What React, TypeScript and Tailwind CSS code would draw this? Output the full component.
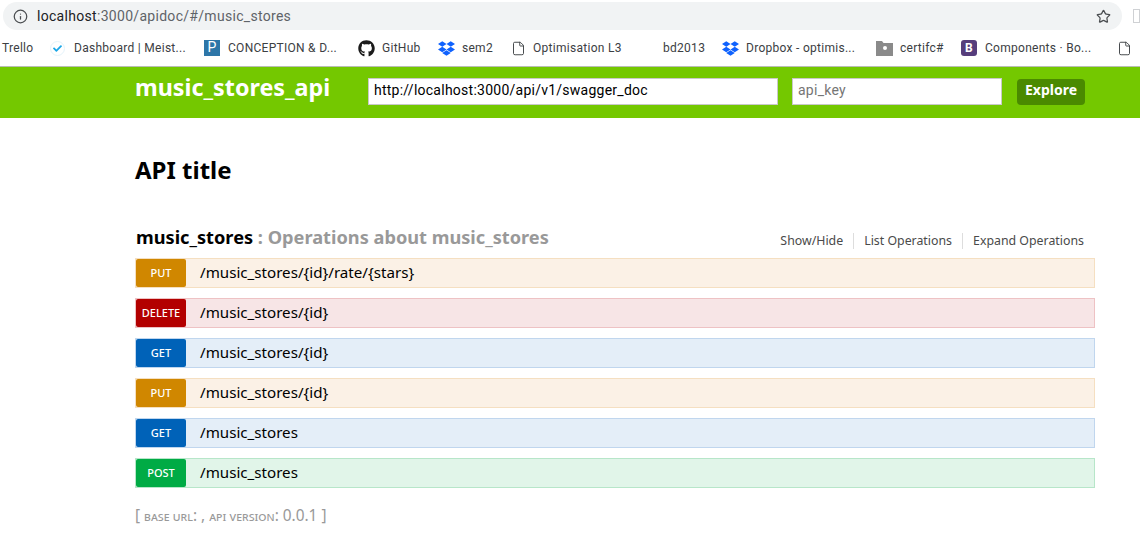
import React from "react";
import { Info, Star, File } from "lucide-react";
import { FaGithub, FaDropbox, FaCheck } from "react-icons/fa";

const sans = "font-['Noto_Sans','Open_Sans',sans-serif]";

function Bm({ w, icon, label, cls = "" }: { w: string; icon?: React.ReactNode; label?: string; cls?: string }) {
  return (
    <div className={`flex items-center shrink-0 ${w} ${cls}`}>
      {icon && <span className="w-[23px] shrink-0 flex items-center">{icon}</span>}
      {label && <span className="whitespace-nowrap">{label}</span>}
    </div>
  );
}

const ops = [
  { m: "PUT", p: "/music_stores/{id}/rate/{stars}", bar: "bg-[#fbf1e6] border-[#f5dfc1]", b: "bg-[#d08700]" },
  { m: "DELETE", p: "/music_stores/{id}", bar: "bg-[#f7e5e6] border-[#eec2c4]", b: "bg-[#b30000]" },
  { m: "GET", p: "/music_stores/{id}", bar: "bg-[#e4eef8] border-[#c0d6ee]", b: "bg-[#0062b8]" },
  { m: "PUT", p: "/music_stores/{id}", bar: "bg-[#fbf1e6] border-[#f5dfc1]", b: "bg-[#d08700]" },
  { m: "GET", p: "/music_stores", bar: "bg-[#e4eef8] border-[#c0d6ee]", b: "bg-[#0062b8]" },
  { m: "POST", p: "/music_stores", bar: "bg-[#e1f5e9] border-[#b7e6c9]", b: "bg-[#00ab45]" },
];

export default function App() {
  return (
    <div className={`w-[1140px] h-[542px] overflow-hidden bg-white ${sans}`}>
      <div className="h-[66px] font-['Roboto',sans-serif]">
        <div className="pt-[2px] pl-[3px] pr-[18px] relative">
          <div className="h-[28px] rounded-full bg-[#f1f3f4] flex items-center pl-[10px] pr-[11px] text-[14px] tracking-[0.3px] text-[#5f6368]">
            <Info size={15} strokeWidth={2} className="text-[#4a4d50] mr-[9px]" />
            <span><span className="text-[#202124]">localhost</span>:3000/apidoc/#/music_stores</span>
            <Star size={15} strokeWidth={2} className="ml-auto text-[#4a4d50]" />
          </div>
          <div className="absolute left-[1133px] top-[9px] w-[7px] h-[14px] border border-[#cfd1d4]"></div>
        </div>
        <div className="h-[36px] flex items-center text-[12px] tracking-[0.28px] text-[#3c4043] overflow-hidden">
          <Bm w="w-[51px]" cls="pl-[2px]" label="Trello" />
          <Bm w="w-[153px]" icon={<span className="w-[15px] h-[15px] rounded-full border border-[#e4f3fb] flex items-center justify-center -ml-[1px]"><FaCheck size={9} className="text-[#1aa7e8]" /></span>} label="Dashboard | Meist..." />
          <Bm w="w-[154px]" icon={<span className="w-[16px] h-[16px] bg-[#2d76a8] text-white text-[14px] leading-[15px] text-center font-normal">P</span>} cls="[&>span:first-child]:w-[24px]" label="CONCEPTION & D..." />
          <Bm w="w-[80px]" icon={<FaGithub size={17} className="text-[#1b1b1b]" />} cls="[&>span:first-child]:w-[24px]" label="GitHub" />
          <Bm w="w-[73px]" icon={<FaDropbox size={17} className="text-[#0f62fe]" />} cls="[&>span:first-child]:w-[24px]" label="sem2" />
          <Bm w="w-[152px]" icon={<File size={15} strokeWidth={1.5} className="text-[#3c4043]" />} cls="[&>span:first-child]:w-[22px]" label="Optimisation L3" />
          <Bm w="w-[59px]" label="bd2013" />
          <Bm w="w-[154px]" icon={<FaDropbox size={17} className="text-[#0f62fe]" />} cls="[&>span:first-child]:w-[24px]" label="Dropbox - optimis..." />
          <Bm w="w-[85px]" icon={<svg width="17" height="15" viewBox="0 0 17 15"><path d="M0 0h6l1.5 2H17v13H0z" fill="#8a8a8a" /><circle cx="9" cy="7" r="2" fill="#fff" /></svg>} cls="[&>span:first-child]:w-[24px]" label="certifc#" />
          <Bm w="w-[156px]" icon={<span className="w-[16px] h-[16px] rounded-[3px] bg-[#563d7c] text-white text-[12px] leading-[16px] text-center font-bold">B</span>} cls="[&>span:first-child]:w-[24px]" label="Components · Bo..." />
          <Bm w="w-[20px]" icon={<File size={15} strokeWidth={1.5} className="text-[#3c4043]" />} />
        </div>
      </div>

      <div className="h-[52px] bg-[#74c800] border-t border-[#b9bdb4] flex items-center pl-[135px]">
        <div className="w-[233px] text-white font-bold text-[23.3px] leading-[30px] -mt-[11px]">music_stores_api</div>
        <div className="w-[410px] h-[27px] bg-white border border-[#c9c9c9] pl-[5px] text-[14px] leading-[22px] text-black font-['Roboto',sans-serif] tracking-[0.25px] -mt-[2px]">http://localhost:3000/api/v1/swagger_doc</div>
        <div className="ml-[14px] w-[210px] h-[27px] bg-white border border-[#c9c9c9] pl-[5px] text-[14px] leading-[22px] text-[#757575] font-['Roboto',sans-serif] tracking-[0.25px] -mt-[2px]">api_key</div>
        <div className="ml-[15px] w-[68px] h-[26px] bg-[#4a8a00] rounded-[4px] text-white font-bold text-[14px] leading-[22px] text-center -mt-[2px]">Explore</div>
      </div>

      <div className="ml-[135px] w-[960px]">
        <h1 className="mt-[36px] text-[24px] leading-[32px] font-bold text-black">API title</h1>
        <div className="mt-[33px] h-[36px] pl-[1px] flex items-center">
          <div className="text-[18.2px] leading-[26px] font-bold text-black">music_stores<span className="text-[#999999]"> : Operations about music_stores</span></div>
          <div className="ml-auto flex items-center text-[12.35px] leading-[16px] text-[#4a4a4a] mt-[7px] pr-[11px]">
            <span className="pr-[10px] border-r border-[#dddddd]">Show/Hide</span>
            <span className="px-[10px] border-r border-[#dddddd]">List Operations</span>
            <span className="pl-[10px]">Expand Operations</span>
          </div>
        </div>
        <div className="flex flex-col gap-[10px] mt-[3px]">
          {ops.map((o, i) => (
            <div key={i} className={`h-[30px] border flex items-stretch ${o.bar}`}>
              <div className={`w-[50px] rounded-[2px] text-white text-[11px] font-medium pt-[1px] flex items-center justify-center ${o.b}`}>{o.m}</div>
              <div className="pl-[14px] text-[15.15px] leading-[26px] -translate-y-[0.5px] text-black">{o.p}</div>
            </div>
          ))}
        </div>
        <div className="mt-[18px] text-[#999999] text-[15.4px] leading-[20px] whitespace-nowrap">
          [ <span className="text-[13px] [font-variant:small-caps]">base url</span>: , <span className="text-[13px] [font-variant:small-caps]">api version</span>: 0.0.1 ]
        </div>
      </div>
    </div>
  );
}
